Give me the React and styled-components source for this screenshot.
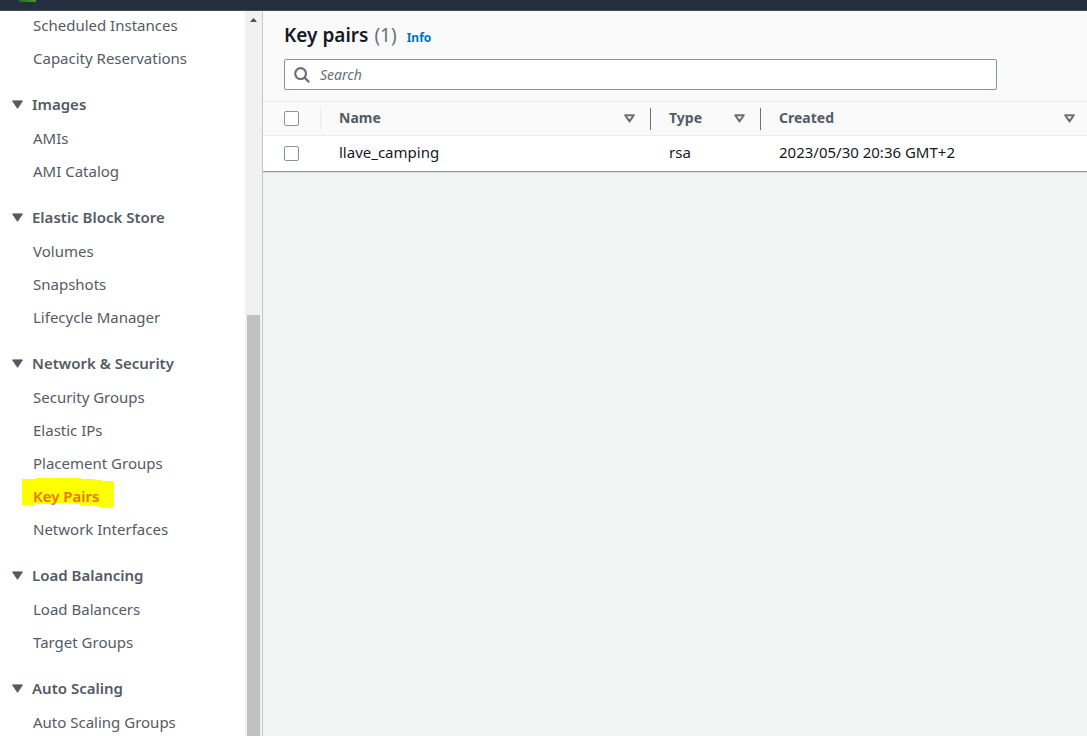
import React from 'react';
import styled, { createGlobalStyle } from 'styled-components';

const GlobalStyle = createGlobalStyle`
  *, *::before, *::after { box-sizing: border-box; }
  body {
    margin: 0;
    font-family: 'Noto Sans', 'Open Sans', sans-serif;
    font-size: 15px;
    line-height: 20px;
    color: #16191f;
  }
`;

const Page = styled.div`
  display: flex;
  flex-direction: column;
  height: 100vh;
  overflow: hidden;
  background: #f2f3f3;
`;

const TopBar = styled.header`
  flex: none;
  height: 11px;
  padding-left: 19px;
  background: #232f3e;
  border-bottom: 1px solid #414d5c;
`;

const ServiceMark = styled.div`
  width: 17px;
  height: 2px;
  background: linear-gradient(90deg, #1f6f14, #4b9a2a);
`;

const Body = styled.div`
  display: flex;
  flex: 1;
  min-height: 0;
`;

const Sidebar = styled.aside`
  display: flex;
  flex: none;
  width: 263px;
  background: #fff;
  border-right: 1px solid #c3caca;
`;

const Nav = styled.nav`
  flex: 1;
  overflow: hidden;
`;

const Group = styled.section`
  padding-bottom: 12px;
`;

const GroupButton = styled.button`
  display: flex;
  align-items: center;
  gap: 9px;
  width: 100%;
  height: 35px;
  padding: 0 0 4px 12px;
  border: 0;
  background: none;
  color: #545b64;
  font: inherit;
  font-weight: 600;
  text-align: left;
`;

const LinkList = styled.ul`
  margin: 0;
  padding: 0 0 0 22px;
  list-style: none;
`;

const LinkRow = styled.li`
  display: flex;
  align-items: center;
  height: 33px;
  padding-bottom: 6px;
`;

const NavLink = styled.a`
  padding-left: 11px;
  color: #545b64;
  text-decoration: none;
`;

const ActiveLink = styled.a`
  display: grid;
  align-items: center;
  flex: none;
  height: 36px;
  color: #ec7211;
  font-weight: 600;
  text-decoration: none;

  & > * { grid-area: 1 / 1; }
`;

const ActiveText = styled.span`
  padding-left: 11px;
  z-index: 1;
`;

const ScrollTrack = styled.div`
  display: flex;
  flex-direction: column;
  align-items: center;
  flex: none;
  width: 17px;
  padding-top: 7px;
  background: #f1f1f1;
`;

const ScrollThumb = styled.div`
  flex: 1;
  width: 13px;
  margin-top: 293px;
  background: #c1c1c1;
`;

const Main = styled.main`
  flex: 1;
  min-width: 0;
`;

const PanelHead = styled.div`
  padding: 10px 90px 11px 21px;
  background: #fafafa;
`;

const TitleRow = styled.div`
  display: flex;
  align-items: baseline;
  gap: 10px;
  height: 38px;
`;

const Title = styled.h1`
  display: flex;
  gap: 6px;
  margin: 0;
  font-size: 19px;
  line-height: 28px;
  font-weight: 600;
`;

const Count = styled.span`
  color: #687078;
  font-weight: 400;
`;

const InfoLink = styled.a`
  color: #0073bb;
  font-size: 12px;
  font-weight: 700;
  text-decoration: none;
`;

const SearchBox = styled.label`
  display: flex;
  align-items: center;
  gap: 10px;
  height: 31px;
  padding: 0 9px;
  border: 1px solid #879596;
  border-radius: 2px;
  background: #fff;
`;

const SearchInput = styled.input`
  flex: 1;
  min-width: 0;
  padding: 0 0 2px;
  border: 0;
  outline: 0;
  background: none;
  font: inherit;
  color: #16191f;

  &::placeholder {
    color: #687078;
    font-size: 14px;
    font-style: italic;
    opacity: 1;
  }
`;

const Table = styled.table`
  width: 100%;
  table-layout: fixed;
  border-collapse: separate;
  border-spacing: 0;
  border-bottom: 1px solid #879596;
  box-shadow: 0 1px 0 #dfe3e3;
  background: #fff;
  text-align: left;
`;

const HeadCell = styled.th`
  width: ${(p) => p.$width || 'auto'};
  height: 35px;
  padding: 0;
  border-top: 1px solid #eaeded;
  border-bottom: 1px solid #eaeded;
  background: #fafafa;
  color: #545b64;
  font-size: 14px;
  font-weight: 700;
`;

const HeadInner = styled.div`
  display: flex;
  align-items: center;
  justify-content: space-between;
  height: 22px;
  padding: 0 ${(p) => (p.$divider ? 15 : 12)}px 0 ${(p) => (p.$check ? 21 : 18)}px;
  border-right: ${(p) => (p.$divider ? `1px solid ${p.$divider}` : '0')};
`;

const Label = styled.span`
  padding-bottom: 2px;
`;

const Cell = styled.td`
  height: 35px;
  padding: ${(p) => (p.$check ? '0 0 0 21px' : '0 0 4px 18px')};
`;

const Checkbox = styled.input`
  appearance: none;
  display: block;
  width: 15px;
  height: 15px;
  margin: 0;
  border: 1px solid #879596;
  border-radius: 2px;
  background: #fff;
`;

const SortButton = styled.button`
  display: flex;
  padding: 0;
  border: 0;
  background: none;
`;

const groups = [
  { links: ['Scheduled Instances', 'Capacity Reservations'] },
  { title: 'Images', links: ['AMIs', 'AMI Catalog'] },
  { title: 'Elastic Block Store', links: ['Volumes', 'Snapshots', 'Lifecycle Manager'] },
  {
    title: 'Network & Security',
    links: ['Security Groups', 'Elastic IPs', 'Placement Groups', 'Key Pairs', 'Network Interfaces'],
  },
  { title: 'Load Balancing', links: ['Load Balancers', 'Target Groups'] },
  { title: 'Auto Scaling', links: ['Auto Scaling Groups'] },
];

const Caret = () => (
  <svg width="11" height="9" viewBox="0 0 11 9" aria-hidden="true">
    <path d="M.6 .9h9.8L5.5 8.3z" fill="#545b64" stroke="#545b64" strokeLinejoin="round" />
  </svg>
);

const SortIcon = () => (
  <svg width="11" height="9" viewBox="0 0 11 9" aria-hidden="true">
    <path d="M1.2 1.2h8.6L5.5 7.4z" fill="none" stroke="#687078" strokeWidth="2" strokeLinejoin="round" />
  </svg>
);

const SearchIcon = () => (
  <svg width="16" height="16" viewBox="0 0 16 16" fill="none" stroke="#687078" strokeWidth="2.2" aria-hidden="true">
    <circle cx="6.6" cy="6.6" r="5.4" />
    <path d="M10.6 10.6l4.6 4.6" />
  </svg>
);

const Highlight = () => (
  <svg width="92" height="36" viewBox="0 0 92 36" aria-hidden="true">
    <path
      d="M0 1H13V0H59V1H73V2H80V3H92V29H76V28H71V27H58V26H51V25H32V26H13V27H0z"
      fill="#ff0"
    />
  </svg>
);

const SortHeader = ({ label, width, divider }) => (
  <HeadCell scope="col" $width={width}>
    <HeadInner $divider={divider}>
      <Label>{label}</Label>
      <SortButton type="button" aria-label={`Sort by ${label}`}>
        <SortIcon />
      </SortButton>
    </HeadInner>
  </HeadCell>
);

export default function App() {
  return (
    <>
      <GlobalStyle />
      <Page>
        <TopBar>
          <ServiceMark />
        </TopBar>
        <Body>
          <Sidebar>
            <Nav aria-label="EC2">
              {groups.map((group) => (
                <Group key={group.links[0]}>
                  {group.title && (
                    <GroupButton type="button" aria-expanded="true">
                      <Caret />
                      <Label>{group.title}</Label>
                    </GroupButton>
                  )}
                  <LinkList>
                    {group.links.map((link) => (
                      <LinkRow key={link}>
                        {link === 'Key Pairs' ? (
                          <ActiveLink href="#" aria-current="page">
                            <Highlight />
                            <ActiveText>{link}</ActiveText>
                          </ActiveLink>
                        ) : (
                          <NavLink href="#">{link}</NavLink>
                        )}
                      </LinkRow>
                    ))}
                  </LinkList>
                </Group>
              ))}
            </Nav>
            <ScrollTrack aria-hidden="true">
              <svg width="7" height="4" viewBox="0 0 7 4">
                <path d="M0 4L3.5 0L7 4z" fill="#505050" />
              </svg>
              <ScrollThumb />
            </ScrollTrack>
          </Sidebar>
          <Main>
            <PanelHead>
              <TitleRow>
                <Title>
                  Key pairs <Count>(1)</Count>
                </Title>
                <InfoLink href="#">Info</InfoLink>
              </TitleRow>
              <SearchBox>
                <SearchIcon />
                <SearchInput type="text" placeholder="Search" aria-label="Search" />
              </SearchBox>
            </PanelHead>
            <Table>
              <thead>
                <tr>
                  <HeadCell $width="58px">
                    <HeadInner $check $divider="#eaeded">
                      <Checkbox type="checkbox" aria-label="Select all key pairs" />
                    </HeadInner>
                  </HeadCell>
                  <SortHeader label="Name" width="330px" divider="#687078" />
                  <SortHeader label="Type" width="110px" divider="#687078" />
                  <SortHeader label="Created" />
                </tr>
              </thead>
              <tbody>
                <tr>
                  <Cell $check>
                    <Checkbox type="checkbox" aria-label="Select llave_camping" />
                  </Cell>
                  <Cell>llave_camping</Cell>
                  <Cell>rsa</Cell>
                  <Cell>2023/05/30 20:36 GMT+2</Cell>
                </tr>
              </tbody>
            </Table>
          </Main>
        </Body>
      </Page>
    </>
  );
}
